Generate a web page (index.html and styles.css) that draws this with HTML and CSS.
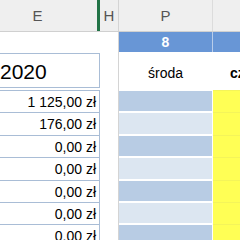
FILE: index.html
```html
<!DOCTYPE html>
<html>
<head>
<meta charset="utf-8">
<link rel="stylesheet" href="styles.css">
</head>
<body>
<div class="sheet">
  <div class="row hdr">
    <div class="c e">E</div>
    <div class="c h">H</div>
    <div class="grid"></div>
    <div class="c p">P</div>
    <div class="sep"></div>
    <div class="c q"></div>
  </div>
  <div class="row num">
    <div class="c"></div>
    <div class="c"></div>
    <div class="grid"></div>
    <div class="c p">8</div>
    <div class="sep"></div>
    <div class="c q"></div>
  </div>
  <div class="row day">
    <div class="c e"><div class="title">2020</div></div>
    <div class="c"></div>
    <div class="grid"></div>
    <div class="c p">środa</div>
    <div class="sep"></div>
    <div class="c q">cz</div>
  </div>
  <div class="row data dark"><div class="c e">1 125,00 zł</div><div class="c"></div><div class="grid"></div><div class="c p"></div><div class="sep"></div><div class="c q"></div></div>
  <div class="row data light tall"><div class="c e">176,00 zł</div><div class="c"></div><div class="grid"></div><div class="c p"></div><div class="sep"></div><div class="c q"></div></div>
  <div class="row data dark"><div class="c e">0,00 zł</div><div class="c"></div><div class="grid"></div><div class="c p"></div><div class="sep"></div><div class="c q"></div></div>
  <div class="row data light tall"><div class="c e">0,00 zł</div><div class="c"></div><div class="grid"></div><div class="c p"></div><div class="sep"></div><div class="c q"></div></div>
  <div class="row data dark"><div class="c e">0,00 zł</div><div class="c"></div><div class="grid"></div><div class="c p"></div><div class="sep"></div><div class="c q"></div></div>
  <div class="row data light"><div class="c e">0,00 zł</div><div class="c"></div><div class="grid"></div><div class="c p"></div><div class="sep"></div><div class="c q"></div></div>
  <div class="row data dark tall"><div class="c e">0,00 zł</div><div class="c"></div><div class="grid"></div><div class="c p"></div><div class="sep"></div><div class="c q"></div></div>
</div>
</body>
</html>
```
FILE: styles.css
```css
html, body {
  margin: 0;
  padding: 0;
  background: #ffffff;
}
body {
  width: 240px;
  height: 240px;
  overflow: hidden;
  font-family: "Liberation Sans", Arial, sans-serif;
  color: #111;
}
.sheet {
  display: flex;
  flex-direction: column;
}
.row {
  display: grid;
  grid-template-columns: 100px 18px 1px 93px 1px 1fr;
}
.grid {
  background: #d4d4d4;
}
.c {
  display: flex;
  align-items: center;
  overflow: hidden;
  white-space: nowrap;
}
/* header */
.hdr {
  height: 31px;
  background: #efefef;
  border-bottom: 1px solid #d0d0d0;
  color: #555;
  font-size: 15px;
}
.hdr .e {
  justify-content: center;
  padding-right: 22px;
  border-right: 3px solid #217346;
}
.hdr .h {
  justify-content: center;
}
.hdr .p {
  justify-content: center;
}
.hdr .sep {
  background: #dcdcdc;
}
/* row with day number */
.num {
  height: 20px;
}
.num .p, .num .q {
  background: #6896d6;
}
.num .p {
  justify-content: center;
  color: #fff;
  font-weight: bold;
  font-size: 14px;
}
.num .sep {
  background: #b9cdea;
}
/* day names row */
.day {
  height: 38px;
}
.day .e {
  border: 1px solid #a9bdd6;
  border-left: none;
  margin: 1px 0 2px;
}
.title {
  font-size: 21px;
  color: #000;
  padding-top: 2px;
}
.day .p {
  justify-content: center;
  font-size: 14px;
  color: #000;
  padding-top: 4px;
}
.day .q {
  font-size: 14px;
  font-weight: bold;
  color: #000;
  padding-left: 17px;
  padding-top: 4px;
}
/* data rows */
.data {
  height: 22px;
}
.data.tall {
  height: 23px;
}
.data .e {
  justify-content: flex-end;
  padding-right: 3px;
  font-size: 14px;
  color: #000;
  border-top: 1px solid #a9bdd6;
  border-right: 1px solid #a9bdd6;
}
.data .p {
  border-top: 1px solid #ffffff;
  border-bottom: 1px solid #ffffff;
}
.data.dark .p {
  background: #b8cce4;
}
.data.light .p {
  background: #dce6f1;
}
.data .sep {
  background: #ffffff;
}
.data .q {
  background: #ffff55;
  border-top: 1px solid #f4f45a;
}
```
